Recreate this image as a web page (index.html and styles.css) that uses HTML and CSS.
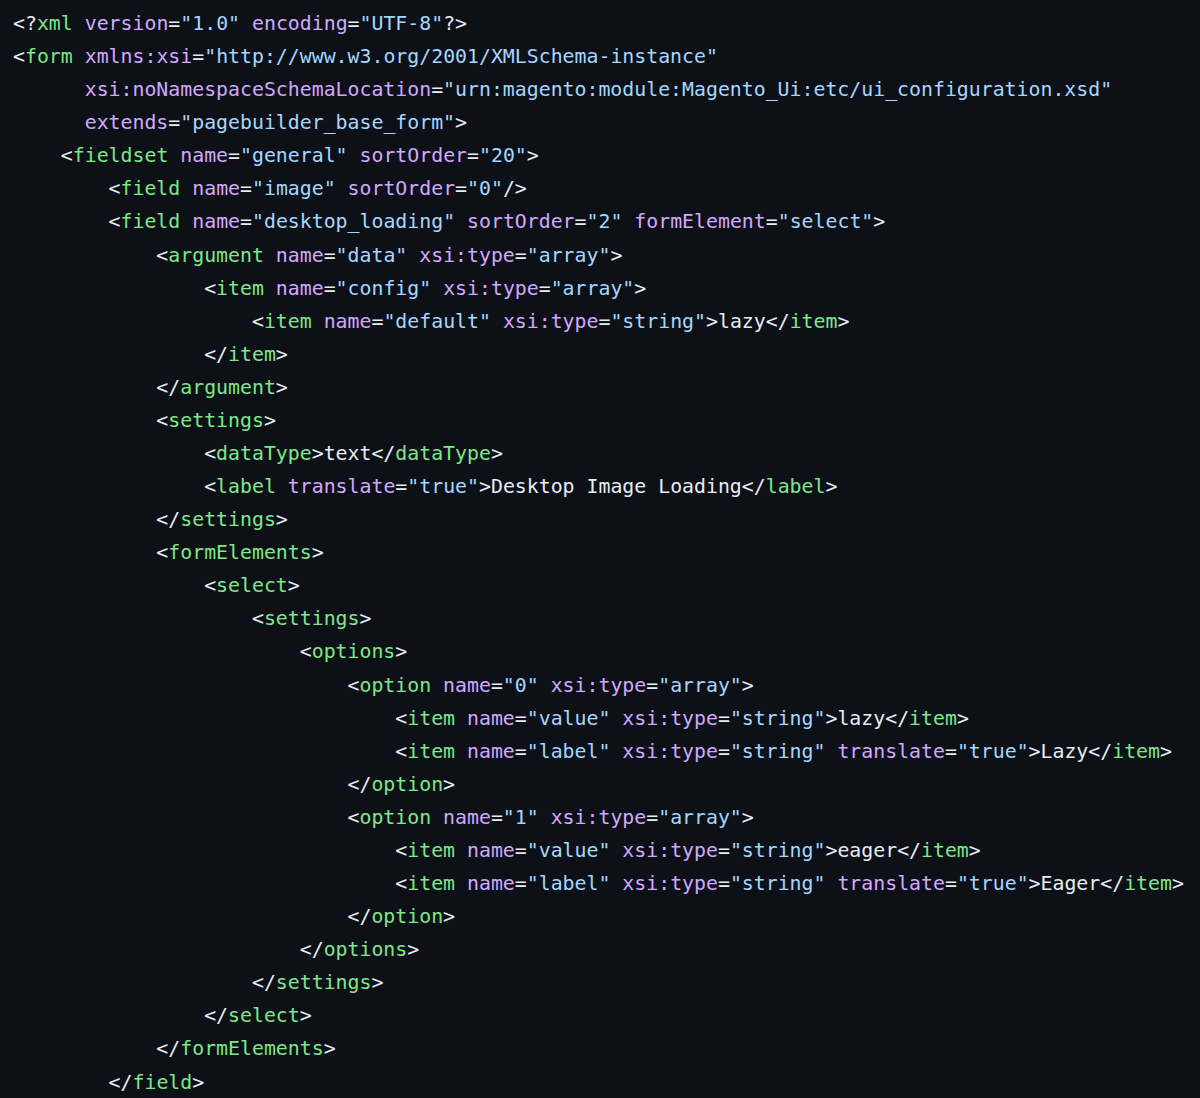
FILE: index.html
```html
<!DOCTYPE html>
<html lang="en">
<head>
    <meta charset="UTF-8">
    <title>pagebuilder form</title>
    <link rel="stylesheet" href="styles.css">
</head>
<body>
<pre class="code">&lt;?<span class="tag">xml</span> <span class="attr">version</span>=<span class="str">"1.0"</span> <span class="attr">encoding</span>=<span class="str">"UTF-8"</span>?&gt;
&lt;<span class="tag">form</span> <span class="attr">xmlns:xsi</span>=<span class="str">"http://www.w3.org/2001/XMLSchema-instance"</span>
      <span class="attr">xsi:noNamespaceSchemaLocation</span>=<span class="str">"urn:magento:module:Magento_Ui:etc/ui_configuration.xsd"</span>
      <span class="attr">extends</span>=<span class="str">"pagebuilder_base_form"</span>&gt;
    &lt;<span class="tag">fieldset</span> <span class="attr">name</span>=<span class="str">"general"</span> <span class="attr">sortOrder</span>=<span class="str">"20"</span>&gt;
        &lt;<span class="tag">field</span> <span class="attr">name</span>=<span class="str">"image"</span> <span class="attr">sortOrder</span>=<span class="str">"0"</span>/&gt;
        &lt;<span class="tag">field</span> <span class="attr">name</span>=<span class="str">"desktop_loading"</span> <span class="attr">sortOrder</span>=<span class="str">"2"</span> <span class="attr">formElement</span>=<span class="str">"select"</span>&gt;
            &lt;<span class="tag">argument</span> <span class="attr">name</span>=<span class="str">"data"</span> <span class="attr">xsi:type</span>=<span class="str">"array"</span>&gt;
                &lt;<span class="tag">item</span> <span class="attr">name</span>=<span class="str">"config"</span> <span class="attr">xsi:type</span>=<span class="str">"array"</span>&gt;
                    &lt;<span class="tag">item</span> <span class="attr">name</span>=<span class="str">"default"</span> <span class="attr">xsi:type</span>=<span class="str">"string"</span>&gt;lazy&lt;/<span class="tag">item</span>&gt;
                &lt;/<span class="tag">item</span>&gt;
            &lt;/<span class="tag">argument</span>&gt;
            &lt;<span class="tag">settings</span>&gt;
                &lt;<span class="tag">dataType</span>&gt;text&lt;/<span class="tag">dataType</span>&gt;
                &lt;<span class="tag">label</span> <span class="attr">translate</span>=<span class="str">"true"</span>&gt;Desktop Image Loading&lt;/<span class="tag">label</span>&gt;
            &lt;/<span class="tag">settings</span>&gt;
            &lt;<span class="tag">formElements</span>&gt;
                &lt;<span class="tag">select</span>&gt;
                    &lt;<span class="tag">settings</span>&gt;
                        &lt;<span class="tag">options</span>&gt;
                            &lt;<span class="tag">option</span> <span class="attr">name</span>=<span class="str">"0"</span> <span class="attr">xsi:type</span>=<span class="str">"array"</span>&gt;
                                &lt;<span class="tag">item</span> <span class="attr">name</span>=<span class="str">"value"</span> <span class="attr">xsi:type</span>=<span class="str">"string"</span>&gt;lazy&lt;/<span class="tag">item</span>&gt;
                                &lt;<span class="tag">item</span> <span class="attr">name</span>=<span class="str">"label"</span> <span class="attr">xsi:type</span>=<span class="str">"string"</span> <span class="attr">translate</span>=<span class="str">"true"</span>&gt;Lazy&lt;/<span class="tag">item</span>&gt;
                            &lt;/<span class="tag">option</span>&gt;
                            &lt;<span class="tag">option</span> <span class="attr">name</span>=<span class="str">"1"</span> <span class="attr">xsi:type</span>=<span class="str">"array"</span>&gt;
                                &lt;<span class="tag">item</span> <span class="attr">name</span>=<span class="str">"value"</span> <span class="attr">xsi:type</span>=<span class="str">"string"</span>&gt;eager&lt;/<span class="tag">item</span>&gt;
                                &lt;<span class="tag">item</span> <span class="attr">name</span>=<span class="str">"label"</span> <span class="attr">xsi:type</span>=<span class="str">"string"</span> <span class="attr">translate</span>=<span class="str">"true"</span>&gt;Eager&lt;/<span class="tag">item</span>&gt;
                            &lt;/<span class="tag">option</span>&gt;
                        &lt;/<span class="tag">options</span>&gt;
                    &lt;/<span class="tag">settings</span>&gt;
                &lt;/<span class="tag">select</span>&gt;
            &lt;/<span class="tag">formElements</span>&gt;
        &lt;/<span class="tag">field</span>&gt;</pre>
</body>
</html>
```

FILE: styles.css
```css
html, body {
    margin: 0;
    background: #0d1117;
}
.code {
    margin: 0;
    padding: 7px 13px;
    font-family: "DejaVu Sans Mono", "Liberation Mono", monospace;
    font-size: 19.85px;
    line-height: 33.08px;
    color: #e6edf3;
    white-space: pre;
}
.tag {
    color: #7ee787;
}
.attr {
    color: #d2a8ff;
}
.str {
    color: #a5d6ff;
}
```
